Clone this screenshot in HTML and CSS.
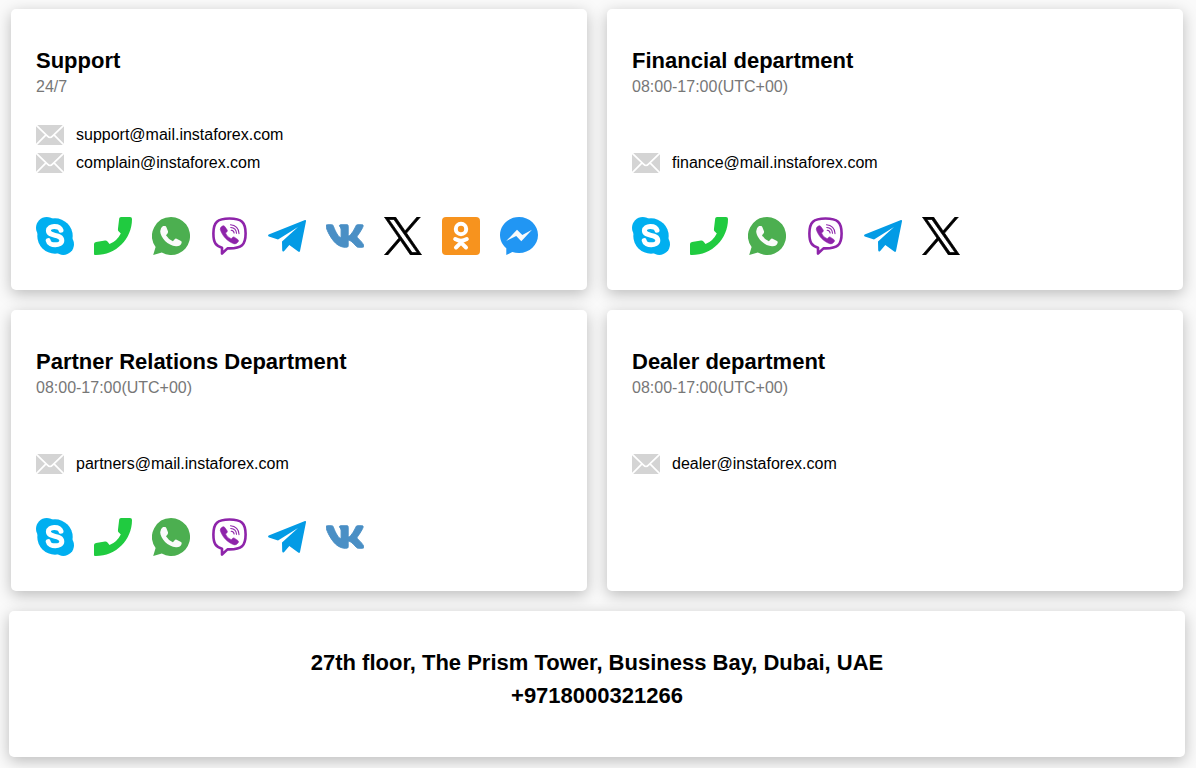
FILE: index.html
```html
<!DOCTYPE html>
<html lang="en">
<head>
    <meta charset="UTF-8">
    <meta name="viewport" content="width=device-width, initial-scale=1.0">
    <title>Contacts</title>
    <link rel="stylesheet" href="styles.css">
</head>
<body>
    <!-- Icons -->
    <svg class="sprite" aria-hidden="true">
        <symbol id="mail" viewBox="0 0 28 20">
            <rect width="28" height="20" fill="#d4d4d4"/>
            <path d="M0 0L11.5 11.2Q14 13.8 16.5 11.2L28 0M0 20L10 9.8M28 20L18 9.8" fill="none" stroke="#fff" stroke-width="1.7"/>
        </symbol>
        <symbol id="skype" viewBox="0 0 38 38">
            <g fill="#00aff0">
                <circle cx="19" cy="19" r="17.7"/>
                <circle cx="10.7" cy="10.7" r="10.7"/>
                <circle cx="27.3" cy="27.3" r="10.7"/>
            </g>
            <path d="M25 13.2C23.5 8 12.400 8.200 12.400 13.600C12.400 20.200 25.800 16.400 25.800 23.400C25.800 29.200 13.200 29.400 12.200 23.600" fill="none" stroke="#fff" stroke-width="5" stroke-linecap="round"/>
        </symbol>
        <symbol id="phone" viewBox="0 0 38 38">
            <path fill="#20cb40" d="M27 0H36Q38 0 38 2C38 22 22 38 2 38H1Q0 38 0 37V27Q0 25.5 2 25L11 23.6Q12.5 23.4 13.5 24.6L15.5 27Q23 24 26.8 16.4L24.3 14Q23.7 13 24 11.5L25.2 1.5Q25.4 0 27 0Z"/>
        </symbol>
        <symbol id="whatsapp" viewBox="0 0 38 38">
            <path fill="#4caf50" d="M19 0A19 19 0 1 1 9.8 35.6L1.2 38L3.6 30A19 19 0 0 1 19 0Z"/>
            <path fill="#fafafa" d="M11 9H13Q14 9 14.4 10.2L16 14.3Q16.3 15.4 15.5 16.4L14 18.2Q16.5 22.4 20.9 24.3L22.9 21.9Q23.6 21.2 24.6 21.7L29 23.9Q30 24.5 29.6 26Q28.3 29.6 24 29.3C16 29 8.2 20.3 8.2 14.3Q8.2 10.8 11 9Z"/>
        </symbol>
        <symbol id="viber" viewBox="0 0 38 38">
            <g fill="none" stroke="#8e24aa" stroke-linecap="round" stroke-linejoin="round">
                <path stroke-width="2.6" d="M19.5 1.5C31.5 1.5 35.6 5 35.6 16.5C35.6 28 31.5 31.4 19.5 31.4H17.5L12 36.5V30.7C6 29 3.4 26 3.4 16.5C3.4 5 7.5 1.5 19.5 1.5Z"/>
                <path stroke-width="1.1" d="M20.5 7.800C25.500 8 29 11.500 29 16.600M20.800 10.500C24.200 10.800 26.300 12.800 26.500 16.200M21.200 13.200C23 13.400 24 14.300 24.100 16"/>
            </g>
            <path fill="#8e24aa" stroke="#8e24aa" stroke-width=".6" d="M13 8.7Q14 8.5 14.8 9.5L17.2 13Q17.7 14.1 16.8 14.9L15.5 16Q16.8 20 21.3 21.8L22.5 20.4Q23.3 19.5 24.4 20.2L28 22.7Q28.9 23.5 28.3 24.6Q26.5 27.5 24 26.8C17.5 24.5 12.3 19 10.3 12.6Q9.8 10.2 13 8.7Z"/>
        </symbol>
        <symbol id="telegram" viewBox="0 0 38 38">
            <path fill="#039be5" d="M.7 17.6L37 3.1Q38.2 2.9 38 4.2L32 34Q31.5 35.4 30.2 34.6L21.3 28L16 34.2Q14.5 35.2 14.2 33.2L14 24.6L30 10L10 22.4L.8 19.4Q-.6 18.4 .7 17.6Z"/>
        </symbol>
        <symbol id="vk" viewBox="18 -14 540 540">
            <path fill="#4a8fc5" stroke="#4a8fc5" stroke-width="14" stroke-linejoin="round" d="M545 117.700c3.700-12.500 0-21.700-17.800-21.700h-58.900c-15 0-21.900 7.900-25.600 16.700 0 0-30 73.100-72.400 120.500-13.700 13.700-20 18.100-27.500 18.100-3.700 0-9.400-4.400-9.400-16.900V117.700c0-15-4.200-21.700-16.600-21.700h-92.600c-9.400 0-15 7-15 13.500 0 14.200 21.200 17.500 23.400 57.500v86.800c0 19-3.400 22.500-10.900 22.500-20 0-68.600-73.400-97.400-157.400-5.800-16.300-11.500-22.900-26.600-22.900H38.800c-16.800 0-20.200 7.900-20.200 16.700 0 15.600 20 93.100 93.100 195.500C160.400 378.100 229 416 291.400 416c37.500 0 42.100-8.400 42.100-22.900 0-66.800-3.400-73.100 15.400-73.100 8.700 0 23.700 4.400 58.700 38.100 40 40 46.600 57.900 69 57.900h58.900c16.800 0 25.300-8.400 20.400-25-11.200-34.900-86.900-106.700-90.300-111.500-8.700-11.200-6.200-16.200 0-26.200.1-.1 72-101.300 79.400-135.600z"/>
        </symbol>
        <symbol id="x" viewBox="0 0 1200 1227">
            <path stroke="#000" stroke-width="24" d="M714.163 519.284L1160.890 0H1055.030L667.137 450.887L357.328 0H0L468.492 681.821L0 1226.370H105.866L515.491 750.218L842.672 1226.370H1200L714.137 519.284ZM569.165 687.828L521.697 619.934L144.011 79.694H306.615L611.412 515.685L658.880 583.579L1055.080 1150.300H892.476L569.165 687.854Z"/>
        </symbol>
        <symbol id="ok" viewBox="0 0 38 38">
            <rect width="38" height="38" rx="4" fill="#f7931e"/>
            <g fill="none" stroke="#fff" stroke-width="4" stroke-linecap="round" stroke-linejoin="round">
                <circle cx="19" cy="12" r="5.2"/>
                <path d="M13.200 22Q19 25.600 24.800 22M14 30.500L19 25.600L24 30.500"/>
            </g>
        </symbol>
        <symbol id="messenger" viewBox="0 0 38 38">
            <path fill="#2196f3" d="M19 0C29.500 0 38 8 38 18C38 28 29.500 36 19 36Q15.500 36 12.300 35L6.300 38V31.200C2.500 28 0 23.400 0 18C0 8 8.500 0 19 0Z"/>
            <path fill="#fafafa" d="M6.200 24L17 12.800L22.300 18L32 12.800L21.300 24.200L16.200 19Z"/>
        </symbol>
    </svg>

    <div class="departments">
        <div class="card">
            <h2>Support</h2>
            <p class="time">24/7</p>
            <div class="mails">
                <a href="mailto:support@mail.instaforex.com"><svg><use href="#mail"/></svg>support@mail.instaforex.com</a>
                <a href="mailto:complain@instaforex.com"><svg><use href="#mail"/></svg>complain@instaforex.com</a>
            </div>
            <div class="socials">
                <a href="#" aria-label="Skype"><svg><use href="#skype"/></svg></a>
                <a href="#" aria-label="Phone"><svg><use href="#phone"/></svg></a>
                <a href="#" aria-label="WhatsApp"><svg><use href="#whatsapp"/></svg></a>
                <a href="#" aria-label="Viber"><svg><use href="#viber"/></svg></a>
                <a href="#" aria-label="Telegram"><svg><use href="#telegram"/></svg></a>
                <a href="#" aria-label="VK"><svg><use href="#vk"/></svg></a>
                <a href="#" aria-label="X"><svg><use href="#x"/></svg></a>
                <a href="#" aria-label="Odnoklassniki"><svg><use href="#ok"/></svg></a>
                <a href="#" aria-label="Messenger"><svg><use href="#messenger"/></svg></a>
            </div>
        </div>

        <div class="card">
            <h2>Financial department</h2>
            <p class="time">08:00-17:00(UTC+00)</p>
            <div class="mails">
                <a href="mailto:finance@mail.instaforex.com"><svg><use href="#mail"/></svg>finance@mail.instaforex.com</a>
            </div>
            <div class="socials">
                <a href="#" aria-label="Skype"><svg><use href="#skype"/></svg></a>
                <a href="#" aria-label="Phone"><svg><use href="#phone"/></svg></a>
                <a href="#" aria-label="WhatsApp"><svg><use href="#whatsapp"/></svg></a>
                <a href="#" aria-label="Viber"><svg><use href="#viber"/></svg></a>
                <a href="#" aria-label="Telegram"><svg><use href="#telegram"/></svg></a>
                <a href="#" aria-label="X"><svg><use href="#x"/></svg></a>
            </div>
        </div>

        <div class="card">
            <h2>Partner Relations Department</h2>
            <p class="time">08:00-17:00(UTC+00)</p>
            <div class="mails">
                <a href="mailto:partners@mail.instaforex.com"><svg><use href="#mail"/></svg>partners@mail.instaforex.com</a>
            </div>
            <div class="socials">
                <a href="#" aria-label="Skype"><svg><use href="#skype"/></svg></a>
                <a href="#" aria-label="Phone"><svg><use href="#phone"/></svg></a>
                <a href="#" aria-label="WhatsApp"><svg><use href="#whatsapp"/></svg></a>
                <a href="#" aria-label="Viber"><svg><use href="#viber"/></svg></a>
                <a href="#" aria-label="Telegram"><svg><use href="#telegram"/></svg></a>
                <a href="#" aria-label="VK"><svg><use href="#vk"/></svg></a>
            </div>
        </div>

        <div class="card">
            <h2>Dealer department</h2>
            <p class="time">08:00-17:00(UTC+00)</p>
            <div class="mails">
                <a href="mailto:dealer@instaforex.com"><svg><use href="#mail"/></svg>dealer@instaforex.com</a>
            </div>
        </div>
    </div>

    <div class="address">
        <p>27th floor, The Prism Tower, Business Bay, Dubai, UAE</p>
        <p>+9718000321266</p>
    </div>
</body>
</html>
```
FILE: styles.css
```css
* {
    box-sizing: border-box;
}

body {
    margin: 0;
    padding: 9px 11px 11px 9px;
    background-color: #fafafa;
    color: #000;
    font-family: Arial, "Liberation Sans", sans-serif;
    font-size: 16px;
}

h2, p {
    margin: 0;
}

a {
    color: #000;
    text-decoration: none;
}

.sprite {
    display: none;
}

.departments {
    display: grid;
    grid-template-columns: 1fr 1fr;
    gap: 20px;
    margin: 0 2px 20px;
}

.card, .address {
    background-color: #fff;
    border-radius: 5px;
    box-shadow: 0 4px 15px rgba(0, 0, 0, 0.25);
}

.card {
    padding: 39px 25px 35px;
}

.card h2 {
    font-size: 22px;
    line-height: 26px;
}

.time {
    color: #777;
    line-height: 26px;
}

/* Email links sit at the bottom of the block */
.mails {
    display: flex;
    flex-direction: column;
    justify-content: flex-end;
    align-items: flex-start;
    min-height: 56px;
    margin-top: 21px;
}

.mails a {
    display: flex;
    align-items: center;
    gap: 12px;
    height: 28px;
}

.mails svg {
    width: 28px;
    height: 20px;
}

/* Messengers and social networks */
.socials {
    display: flex;
    flex-wrap: wrap;
    gap: 20px;
    margin-top: 40px;
}

.socials svg {
    display: block;
    width: 38px;
    height: 38px;
}

.address {
    padding: 35px 25px 45px;
    text-align: center;
    font-size: 22px;
    font-weight: bold;
    line-height: 33px;
}
```
